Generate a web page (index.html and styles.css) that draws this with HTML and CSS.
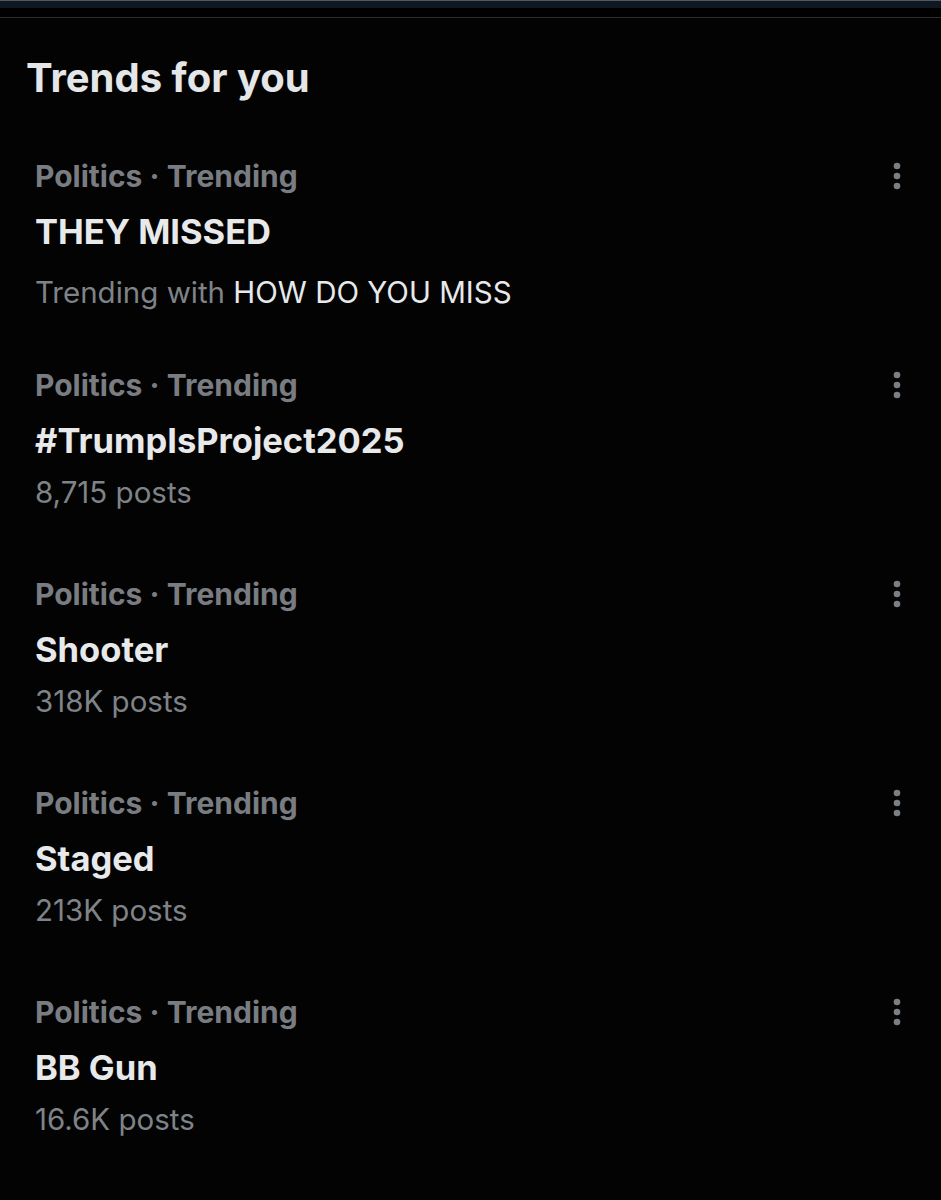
FILE: index.html
```html
<!DOCTYPE html>
<html lang="en">
<head>
  <meta charset="UTF-8" />
  <meta name="viewport" content="width=device-width, initial-scale=1.0"/>
  <title>Trends for you</title>
  <link rel="stylesheet" href="styles.css">
</head>
<body>

  <div class="topbar"></div>
  <div class="topgap"></div>

  <section class="panel">
    <h2 class="panel-title">Trends for you</h2>

    <div class="trend trend--with">
      <div class="trend-body">
        <div class="trend-meta">Politics · Trending</div>
        <div class="trend-name">THEY MISSED</div>
        <div class="trend-sub trend-sub--with">Trending with <span class="trend-link">HOW DO YOU MISS</span></div>
      </div>
      <button class="more" aria-label="More">
        <svg viewBox="0 0 24 28" width="24" height="28"><circle cx="12" cy="4" r="3.3"/><circle cx="12" cy="14" r="3.3"/><circle cx="12" cy="24" r="3.3"/></svg>
      </button>
    </div>

    <div class="trend">
      <div class="trend-body">
        <div class="trend-meta">Politics · Trending</div>
        <div class="trend-name">#TrumpIsProject2025</div>
        <div class="trend-sub">8,715 posts</div>
      </div>
      <button class="more" aria-label="More">
        <svg viewBox="0 0 24 28" width="24" height="28"><circle cx="12" cy="4" r="3.3"/><circle cx="12" cy="14" r="3.3"/><circle cx="12" cy="24" r="3.3"/></svg>
      </button>
    </div>

    <div class="trend">
      <div class="trend-body">
        <div class="trend-meta">Politics · Trending</div>
        <div class="trend-name">Shooter</div>
        <div class="trend-sub">318K posts</div>
      </div>
      <button class="more" aria-label="More">
        <svg viewBox="0 0 24 28" width="24" height="28"><circle cx="12" cy="4" r="3.3"/><circle cx="12" cy="14" r="3.3"/><circle cx="12" cy="24" r="3.3"/></svg>
      </button>
    </div>

    <div class="trend">
      <div class="trend-body">
        <div class="trend-meta">Politics · Trending</div>
        <div class="trend-name">Staged</div>
        <div class="trend-sub">213K posts</div>
      </div>
      <button class="more" aria-label="More">
        <svg viewBox="0 0 24 28" width="24" height="28"><circle cx="12" cy="4" r="3.3"/><circle cx="12" cy="14" r="3.3"/><circle cx="12" cy="24" r="3.3"/></svg>
      </button>
    </div>

    <div class="trend">
      <div class="trend-body">
        <div class="trend-meta">Politics · Trending</div>
        <div class="trend-name">BB Gun</div>
        <div class="trend-sub">16.6K posts</div>
      </div>
      <button class="more" aria-label="More">
        <svg viewBox="0 0 24 28" width="24" height="28"><circle cx="12" cy="4" r="3.3"/><circle cx="12" cy="14" r="3.3"/><circle cx="12" cy="24" r="3.3"/></svg>
      </button>
    </div>
  </section>

</body>
</html>
```

FILE: styles.css
```css
body {
  margin: 0;
  background-color: #030303;
  color: #e7e9ea;
  font-family: Inter, 'Noto Sans', sans-serif;
}

.topbar {
  height: 7px;
  border-top: 1px solid #55585c;
  background-color: #0e1823;
}

.topgap {
  height: 9px;
  background-color: #000;
  border-bottom: 1px solid #2a2c2f;
}

.panel {
  padding: 36px 0 0;
}

.panel-title {
  margin: 0 0 23px 26px;
  font-size: 40px;
  line-height: 48px;
  font-weight: 700;
  color: #e4e6e7;
}

.trend {
  display: flex;
  justify-content: space-between;
  align-items: flex-start;
  padding: 31px 32px 31px 35px;
}

.trend--with {
  padding-bottom: 22px;
}

.trend-meta {
  font-size: 30px;
  line-height: 40px;
  font-weight: 700;
  color: #797d82;
}

.trend-name {
  margin-top: 14px;
  font-size: 34.5px;
  line-height: 44px;
  font-weight: 700;
  color: #e7e9ea;
}

.trend-sub {
  margin-top: 9px;
  font-size: 29.5px;
  line-height: 40px;
  color: #7f8388;
}

.trend-sub--with {
  margin-top: 18px;
}

.trend-link {
  color: #e7e9ea;
}

.more {
  margin-top: 6px;
  padding: 0;
  border: none;
  background: none;
  cursor: pointer;
}

.more svg {
  display: block;
  fill: #7b7f84;
}
```
